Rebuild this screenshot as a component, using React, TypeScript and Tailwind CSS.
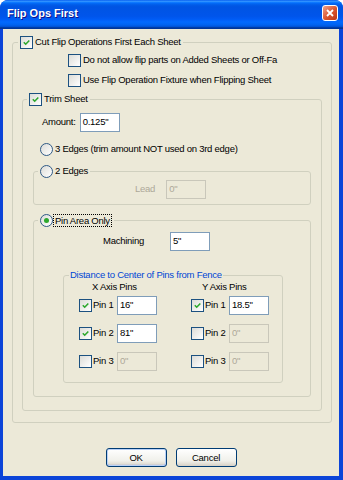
const font = "font-['Liberation_Sans',Arial,sans-serif]";

function Check({ checked }: { checked?: boolean }) {
  return (
    <span className="w-[13px] h-[13px] shrink-0 border border-[#1C5180] bg-[linear-gradient(135deg,#DCDCD7,#FFFFFF)] flex items-center justify-center">
      {checked && (
        <svg width="9" height="9" viewBox="0 0 9 9">
          <path d="M1.8 4.3 L3.7 6.2 L7.3 2.5" fill="none" stroke="#2DA82D" strokeWidth="1.6" />
        </svg>
      )}
    </span>
  );
}

function Radio({ checked }: { checked?: boolean }) {
  return (
    <span className="w-[13px] h-[13px] shrink-0 rounded-full border border-[#2F5A86] bg-[linear-gradient(135deg,#DCDCD7,#FFFFFF)] flex items-center justify-center">
      {checked && <span className="w-[5px] h-[5px] rounded-full bg-[#2DA82D]" />}
    </span>
  );
}

function TextBox({ value, disabled }: { value: string; disabled?: boolean }) {
  return (
    <div
      className={`w-[40px] h-[19px] shrink-0 border px-[2px] leading-[15px] ${
        disabled ? "border-[#C9C7BA] text-[#ACA899]" : "border-[#7F9DB9] bg-white"
      }`}
    >
      {value}
    </div>
  );
}

function PinRow({ n, checked, value }: { n: number; checked?: boolean; value: string }) {
  return (
    <div className="flex items-center h-[19px]">
      <Check checked={checked} />
      <span className="ml-[1px] w-[24px]">Pin {n}</span>
      <TextBox value={value} disabled={!checked} />
    </div>
  );
}

function Button({ label, primary }: { label: string; primary?: boolean }) {
  return (
    <button
      className={`w-[61px] h-[19px] rounded-[3px] border border-[#003C74] bg-[linear-gradient(180deg,#FFFFFF,#F0F0EA_70%,#D6D0C5)] text-center leading-[17px] ${
        primary ? "shadow-[inset_0_0_0_1px_#B9D1F7,inset_0_-1px_1px_#6982EE]" : ""
      }`}
    >
      {label}
    </button>
  );
}

export default function App() {
  return (
    <div
      className={`w-[343px] h-[480px] flex flex-col bg-[#0B44D8] rounded-t-[8px] overflow-hidden text-[9.5px] tracking-[-0.25px] text-black ${font}`}
    >
      <div className="h-[29px] shrink-0 flex items-start pt-[5px] pl-[7px] pr-[5px] bg-[linear-gradient(180deg,#0058EE_0%,#3593FF_4%,#288EFF_6%,#127DFF_8%,#036FFC_10%,#0262EE_14%,#0057E5_20%,#0054E3_24%,#0055EB_56%,#005BF5_66%,#026AFE_76%,#0062EF_86%,#0052D6_92%,#0040AB_94%,#003092_100%)]">
        <span className="text-white font-bold text-[11px] tracking-normal leading-[16px] [text-shadow:1px_1px_#0F1089]">
          Flip Ops First
        </span>
        <div className="ml-auto w-[16px] h-[16px] rounded-[3px] border border-white bg-[linear-gradient(135deg,#F0A38B,#D9532D_55%,#B83516)] flex items-center justify-center">
          <svg width="10" height="10" viewBox="0 0 10 10">
            <path d="M2 2 L8 8 M8 2 L2 8" stroke="white" strokeWidth="1.8" />
          </svg>
        </div>
      </div>

      <div className="flex-1 ml-[3px] mr-[4px] mb-[4px] bg-[#ECE9D8] flex flex-col">
        <fieldset className="mt-[6px] ml-[9px] mr-[7px] border border-[#D0D0BF] rounded-[3px] pb-[11px]">
          <legend className="ml-[5px] px-[2px]">
            <span className="flex items-center h-[14px] gap-[2px]">
              <Check checked />
              <span>Cut Flip Operations First Each Sheet</span>
            </span>
          </legend>
          <div className="mt-[4px] pl-[55px] flex items-center h-[14px] gap-[2px]">
            <Check />
            <span className="w-[195px] overflow-hidden whitespace-nowrap">
              Do not allow flip parts on Added Sheets or Off-Fa
            </span>
          </div>
          <div className="mt-[6px] pl-[55px] flex items-center h-[14px] gap-[2px]">
            <Check />
            <span className="whitespace-nowrap">Use Flip Operation Fixture when Flipping Sheet</span>
          </div>

          <fieldset className="mt-[5px] ml-[9px] mr-[9px] border border-[#D0D0BF] rounded-[3px] pb-[13px]">
            <legend className="ml-[4px] px-[2px]">
              <span className="flex items-center h-[14px] gap-[2px]">
                <Check checked />
                <span>Trim Sheet</span>
              </span>
            </legend>
            <div className="mt-[7px] pl-[19px] flex items-center h-[19px] gap-[4px]">
              <span>Amount:</span>
              <TextBox value={'0.125"'} />
            </div>
            <div className="mt-[10px] pl-[17px] flex items-center h-[14px] gap-[2px]">
              <Radio />
              <span>3 Edges (trim amount NOT used on 3rd edge)</span>
            </div>

            <fieldset className="mt-[8px] ml-[10px] mr-[10px] border border-[#D0D0BF] rounded-[3px] pb-[5px]">
              <legend className="ml-[4px] px-[2px]">
                <span className="flex items-center h-[14px] gap-[2px]">
                  <Radio />
                  <span>2 Edges</span>
                </span>
              </legend>
              <div className="mt-[2px] pl-[101px] flex items-center h-[19px] gap-[11px]">
                <span className="text-[#ACA899]">Lead</span>
                <TextBox value={'0"'} disabled />
              </div>
            </fieldset>

            <fieldset className="mt-[8px] ml-[10px] mr-[10px] border border-[#D0D0BF] rounded-[3px] pb-[13px]">
              <legend className="ml-[4px] px-[2px]">
                <span className="flex items-center h-[14px] gap-[0px]">
                  <Radio checked />
                  <span className="border border-dotted border-black px-[1px] leading-[11px]">Pin Area Only</span>
                </span>
              </legend>
              <div className="mt-[5px] pl-[69px] flex items-center h-[19px]">
                <span className="w-[67px]">Machining</span>
                <TextBox value={'5"'} />
              </div>

              <fieldset className="mt-[18px] ml-[29px] mr-[27px] border border-[#D0D0BF] rounded-[3px] pb-[11px]">
                <legend className="ml-[5px] px-[1px] text-[#0046D5] leading-[12px]">
                  Distance to Center of Pins from Fence
                </legend>
                <div className="flex pl-[15px] gap-[34px]">
                  <div className="flex flex-col">
                    <span className="pl-[13px] h-[12px] leading-[12px]">X Axis Pins</span>
                    <div className="mt-[3px] flex flex-col gap-[9px]">
                      <PinRow n={1} checked value={'16"'} />
                      <PinRow n={2} checked value={'81"'} />
                      <PinRow n={3} value={'0"'} />
                    </div>
                  </div>
                  <div className="flex flex-col">
                    <span className="pl-[11px] h-[12px] leading-[12px]">Y Axis Pins</span>
                    <div className="mt-[3px] flex flex-col gap-[9px]">
                      <PinRow n={1} checked value={'18.5"'} />
                      <PinRow n={2} value={'0"'} />
                      <PinRow n={3} value={'0"'} />
                    </div>
                  </div>
                </div>
              </fieldset>
            </fieldset>
          </fieldset>
        </fieldset>

        <div className="mt-[25px] flex justify-center gap-[9px]">
          <Button label="OK" primary />
          <Button label="Cancel" />
        </div>
      </div>
    </div>
  );
}
